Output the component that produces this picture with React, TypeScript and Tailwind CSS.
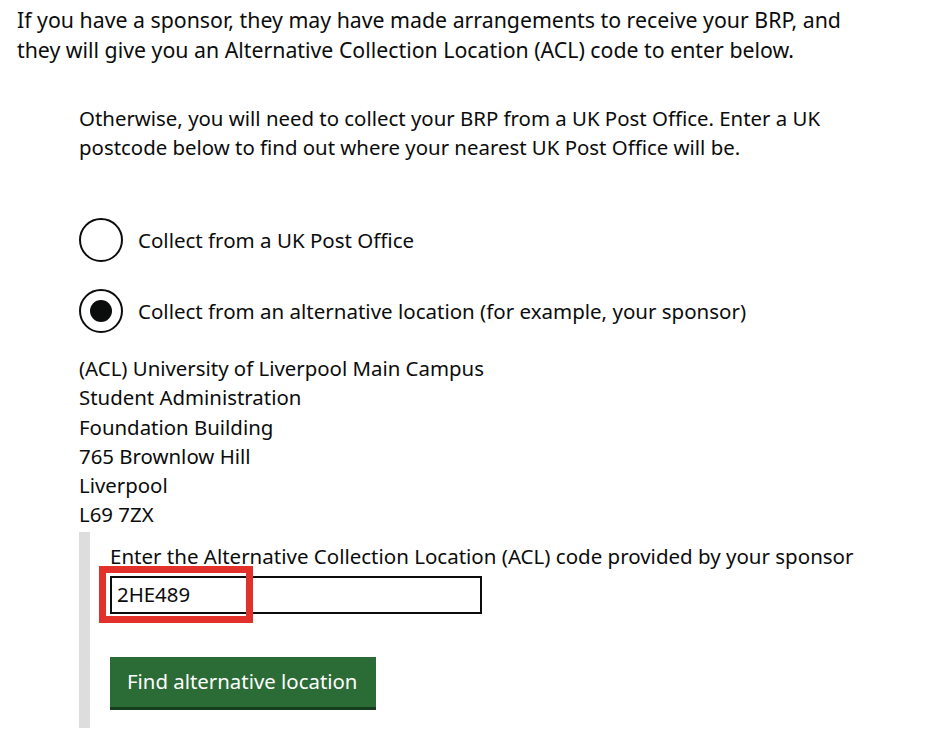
import React from "react";

const font = { fontFamily: '"Noto Sans", "Open Sans", Arial, sans-serif' };

function Radio({ checked, label }: { checked?: boolean; label: string }) {
  return (
    <div className="flex items-center gap-[15px]">
      <span className="flex h-[44px] w-[44px] shrink-0 items-center justify-center rounded-full border-[2px] border-[#0b0c0c] bg-white">
        {checked && <span className="h-[22px] w-[22px] rounded-full bg-[#0b0c0c]" />}
      </span>
      <span className="text-[20.5px] leading-[29px]">{label}</span>
    </div>
  );
}

export default function App() {
  const address = [
    "(ACL) University of Liverpool Main Campus",
    "Student Administration",
    "Foundation Building",
    "765 Brownlow Hill",
    "Liverpool",
    "L69 7ZX",
  ];

  return (
    <div
      className="h-[732px] w-[938px] overflow-hidden bg-white text-[#0b0c0c]"
      style={font}
    >
      <p className="pl-[17px] pt-[5px] text-[21.3px] leading-[30px]">
        If you have a sponsor, they may have made arrangements to receive your BRP, and
        <br />
        they will give you an Alternative Collection Location (ACL) code to enter below.
      </p>

      <div className="pl-[79px]">
        <p className="mt-[39px] text-[20.4px] leading-[29px]">
          Otherwise, you will need to collect your BRP from a UK Post Office. Enter a UK
          <br />
          postcode below to find out where your nearest UK Post Office will be.
        </p>

        <div className="mt-[56px] flex flex-col gap-[27px]">
          <Radio label="Collect from a UK Post Office" />
          <Radio checked label="Collect from an alternative location (for example, your sponsor)" />
        </div>

        <div className="mt-[21px] text-[20.4px] leading-[29.3px]">
          {address.map((line) => (
            <div key={line}>{line}</div>
          ))}
        </div>

        <div className="mt-[2px] border-l-[11px] border-[#dcdddc] pb-[21px] pl-[20px] pt-[10px]">
          <div className="text-[20.5px] leading-[29px]">
            Enter the Alternative Collection Location (ACL) code provided by your sponsor
          </div>
          <div className="relative mt-[5px] w-[372px]">
            <div className="flex h-[38px] w-[372px] items-center border-[2px] border-[#0b0c0c] pl-[5px] text-[20.4px]">
              2HE489
            </div>
            <div className="pointer-events-none absolute left-[-11px] top-[-10px] h-[57px] w-[154px] border-[7px] border-[#e2312b]" />
          </div>
          <button
            className="mt-[43px] h-[50px] w-[266px] bg-[#2b6b36] pl-[17px] text-left text-[20.4px] text-white shadow-[0_3px_0_#163d1d]"
            style={font}
          >
            Find alternative location
          </button>
        </div>
      </div>
    </div>
  );
}
